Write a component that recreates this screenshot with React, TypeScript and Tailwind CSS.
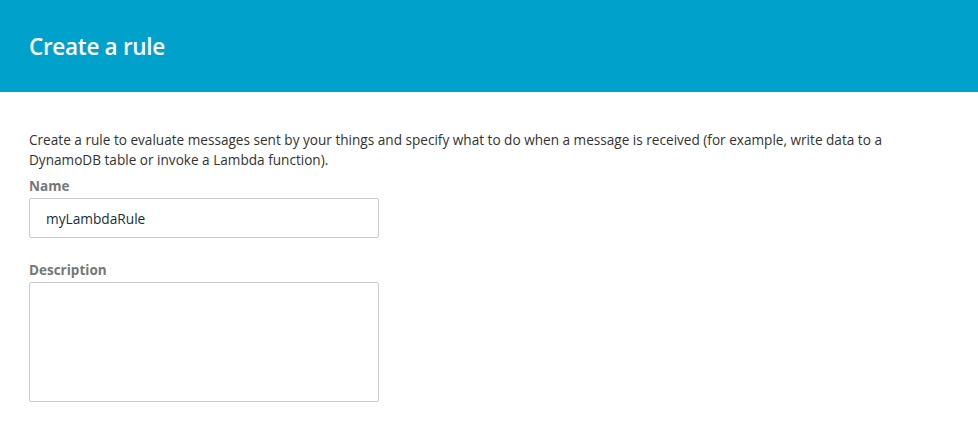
const App = () => {
  return (
    <div className="min-h-[434px] w-full bg-white font-['Open_Sans',sans-serif]">
      <header className="flex h-[92px] items-center border-b border-[#0b9cc4] bg-[#00a1cb] px-[29px]">
        <h1 className="pt-[2px] text-[22.5px] font-semibold tracking-[-0.3px] text-white">
          Create a rule
        </h1>
      </header>
      <main className="px-[29px] pt-[38px]">
        <p className="max-w-[920px] text-[13.6px] leading-[20px] text-[#333]">
          Create a rule to evaluate messages sent by your things and specify what to do when a
          message is received (for example, write data to a DynamoDB table or invoke a Lambda
          function).
        </p>
        <label className="mt-[6px] block text-[13.5px] font-bold leading-[20px] text-[#777]">
          Name
        </label>
        <input
          defaultValue="myLambdaRule"
          className="mt-[2px] block h-[40px] w-[350px] rounded-[2px] border border-[#ccc] px-[16px] text-[13.7px] text-[#12303d] outline-none"
        />
        <label className="mt-[22px] block text-[13.5px] font-bold leading-[20px] text-[#777]">
          Description
        </label>
        <textarea className="mt-[2px] block h-[120px] w-[350px] resize-none rounded-[2px] border border-[#ccc] px-[16px] outline-none" />
      </main>
    </div>
  )
}

export default App
